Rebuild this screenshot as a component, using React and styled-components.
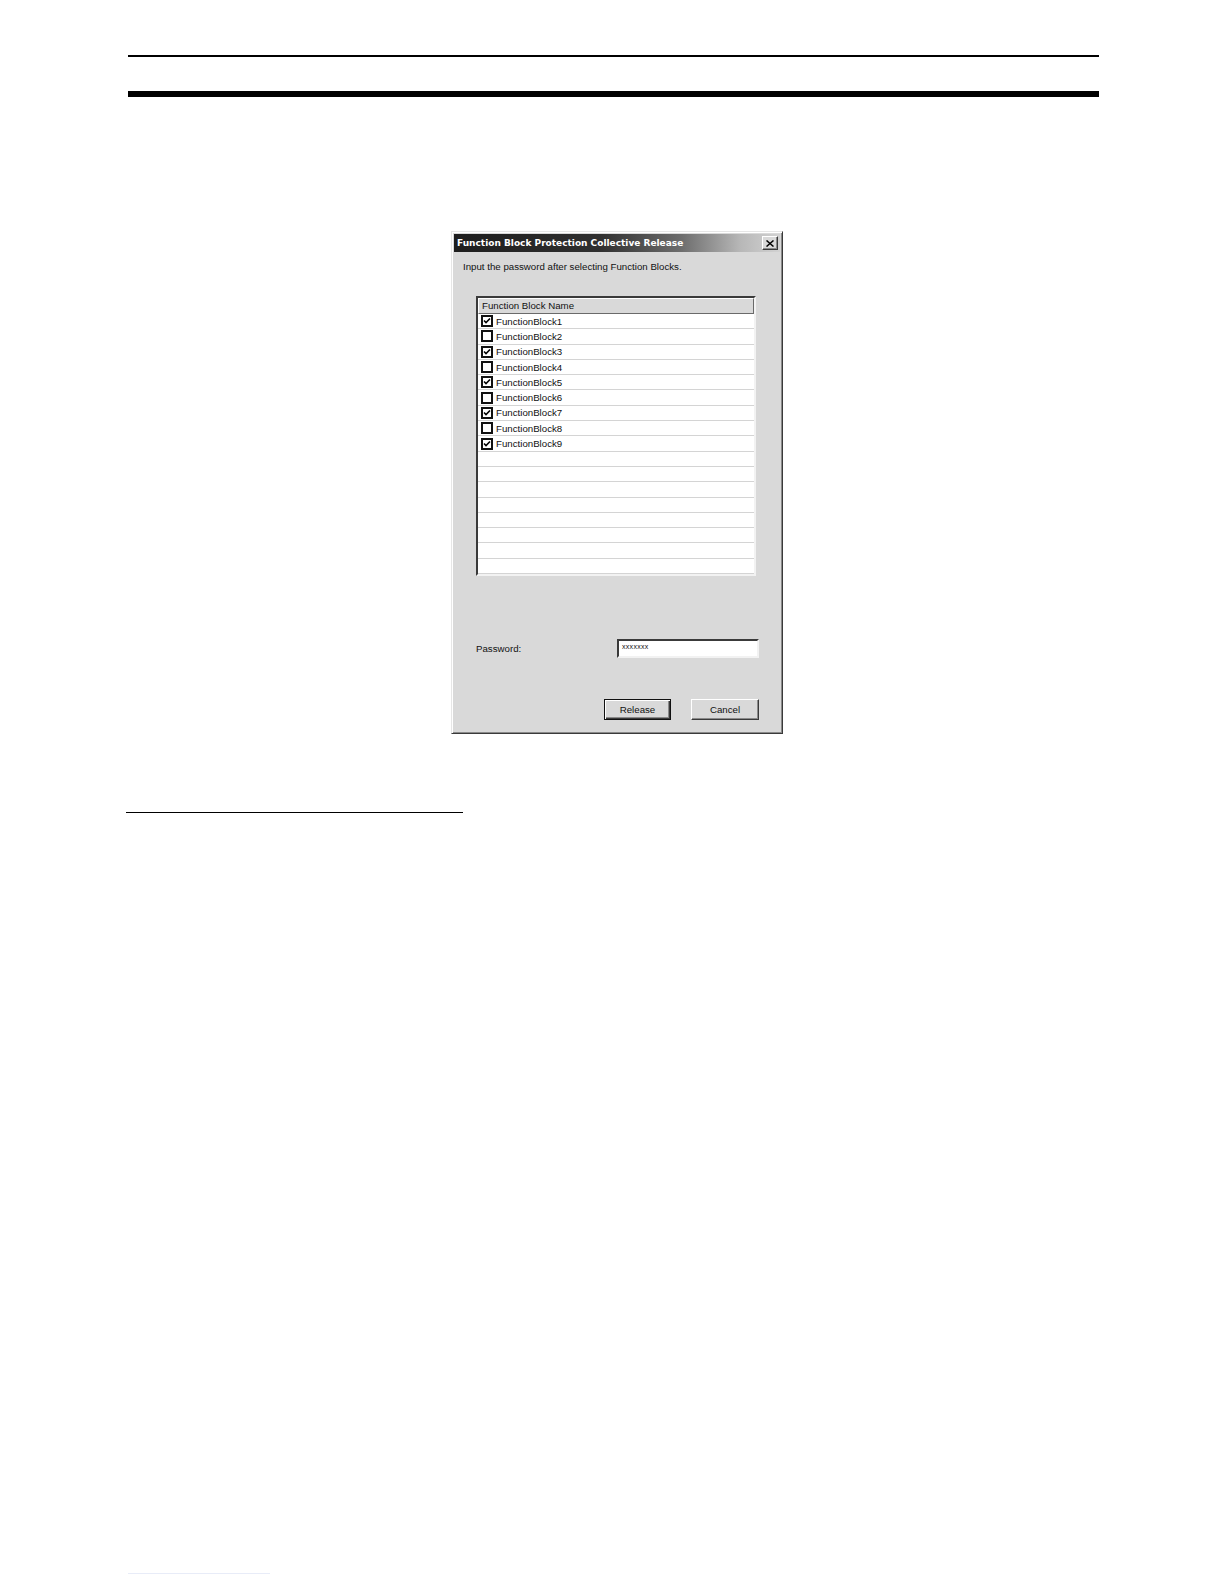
import React from 'react';
import styled, { createGlobalStyle } from 'styled-components';

const GlobalStyle = createGlobalStyle`
    html, body {
        margin: 0;
        padding: 0;
        background: #ffffff;
    }
`;

const blocks = [
    { name: 'FunctionBlock1', checked: true },
    { name: 'FunctionBlock2', checked: false },
    { name: 'FunctionBlock3', checked: true },
    { name: 'FunctionBlock4', checked: false },
    { name: 'FunctionBlock5', checked: true },
    { name: 'FunctionBlock6', checked: false },
    { name: 'FunctionBlock7', checked: true },
    { name: 'FunctionBlock8', checked: false },
    { name: 'FunctionBlock9', checked: true },
];

const EMPTY_ROWS = 8;

const CheckMark = () => (
    <svg width="8" height="8" viewBox="0 0 8 8">
        <path d="M1 3.5 L3 5.5 L7 1.5" fill="none" stroke="#000" strokeWidth="1.6" />
    </svg>
);

const CloseGlyph = () => (
    <svg width="8" height="7" viewBox="0 0 8 7">
        <path d="M0.5 0.5 L7.5 6.5 M7.5 0.5 L0.5 6.5" stroke="#000" strokeWidth="1.5" />
    </svg>
);

const App = () => {
    return (
        <Page>
            <GlobalStyle />
            <TopRule />
            <HeavyRule />
            <Figure>
                <Dialog>
                    <TitleBar>
                        <TitleText>Function Block Protection Collective Release</TitleText>
                        <CloseButton>
                            <CloseGlyph />
                        </CloseButton>
                    </TitleBar>
                    <DialogBody>
                        <Instruction>Input the password after selecting Function Blocks.</Instruction>
                        <ListBox>
                            <ListHeader>Function Block Name</ListHeader>
                            {blocks.map((block) => (
                                <ListRow key={block.name}>
                                    <CheckBox>{block.checked && <CheckMark />}</CheckBox>
                                    <span>{block.name}</span>
                                </ListRow>
                            ))}
                            {Array.from({ length: EMPTY_ROWS }).map((_, i) => (
                                <ListRow key={`empty-${i}`} />
                            ))}
                        </ListBox>
                        <PasswordRow>
                            <FieldLabel>Password:</FieldLabel>
                            <PasswordField>xxxxxxx</PasswordField>
                        </PasswordRow>
                        <ButtonRow>
                            <DialogButton primary>Release</DialogButton>
                            <DialogButton>Cancel</DialogButton>
                        </ButtonRow>
                    </DialogBody>
                </Dialog>
            </Figure>
            <FootRule />
            <PageFootLine />
        </Page>
    );
};

export default App;

const Page = styled.div`
    width: 1224px;
    min-height: 1584px;
    padding-top: 55px;
    box-sizing: border-box;
    font-family: 'Liberation Sans', Arial, sans-serif;
`;

const TopRule = styled.div`
    margin-left: 128px;
    width: 971px;
    height: 2px;
    background: #000;
`;

const HeavyRule = styled.div`
    margin: 34px 0 0 128px;
    width: 971px;
    height: 6px;
    background: #000;
`;

const Figure = styled.div`
    display: flex;
    justify-content: center;
    padding-left: 10px;
    margin-top: 134px;
`;

const Dialog = styled.div`
    width: 332px;
    box-sizing: border-box;
    background: #d9d9d9;
    border: 1px solid;
    border-color: #e6e6e6 #3a3a3a #3a3a3a #e6e6e6;
    box-shadow: inset 1px 1px 0 #ffffff, inset -1px -1px 0 #8a8a8a;
    padding: 2px;
`;

const TitleBar = styled.div`
    height: 18px;
    display: flex;
    align-items: center;
    justify-content: space-between;
    padding: 0 2px 0 3px;
    background: linear-gradient(90deg, #1e1e1e 0%, #303030 45%, #6e6e6e 70%, #b8b8b8 88%, #d2d2d2 100%);
`;

const TitleText = styled.span`
    font-family: 'DejaVu Sans', 'Liberation Sans', sans-serif;
    font-weight: bold;
    font-size: 9px;
    color: #ffffff;
    white-space: nowrap;
`;

const CloseButton = styled.div`
    width: 16px;
    height: 14px;
    box-sizing: border-box;
    display: flex;
    align-items: center;
    justify-content: center;
    background: #d9d9d9;
    border: 1px solid;
    border-color: #ffffff #3a3a3a #3a3a3a #ffffff;
    box-shadow: inset -1px -1px 0 #8a8a8a;
`;

const DialogBody = styled.div`
    padding: 8px 21px 11px 9px;
    font-size: 9.7px;
    color: #111;
`;

const Instruction = styled.div`
    line-height: 13px;
    white-space: nowrap;
`;

const ListBox = styled.div`
    margin: 23px 0 0 13px;
    width: 280px;
    height: 280px;
    box-sizing: border-box;
    background: #ffffff;
    border: 2px solid;
    border-color: #3a3a3a #f2f2f2 #f2f2f2 #3a3a3a;
    overflow: hidden;
`;

const ListHeader = styled.div`
    height: 16px;
    box-sizing: border-box;
    padding-left: 3px;
    line-height: 14px;
    background: #d9d9d9;
    border: 1px solid;
    border-color: #ffffff #6a6a6a #6a6a6a #ffffff;
    white-space: nowrap;
`;

const ListRow = styled.div`
    height: 15.3px;
    box-sizing: border-box;
    display: flex;
    align-items: center;
    gap: 3px;
    padding-left: 3px;
    border-bottom: 1px solid #d4d4d4;
    white-space: nowrap;
`;

const CheckBox = styled.span`
    width: 12px;
    height: 12px;
    box-sizing: border-box;
    display: flex;
    align-items: center;
    justify-content: center;
    border: 2px solid #111;
    background: #ffffff;
`;

const PasswordRow = styled.div`
    display: flex;
    align-items: center;
    margin: 63px 0 0 13px;
`;

const FieldLabel = styled.span`
    width: 141px;
`;

const PasswordField = styled.div`
    width: 142px;
    height: 19px;
    box-sizing: border-box;
    padding: 1px 3px;
    font-size: 7px;
    line-height: 9px;
    letter-spacing: 0.3px;
    background: #ffffff;
    border: 2px solid;
    border-color: #3a3a3a #f2f2f2 #f2f2f2 #3a3a3a;
`;

const ButtonRow = styled.div`
    display: flex;
    justify-content: flex-end;
    gap: 20px;
    margin-top: 41px;
`;

const DialogButton = styled.div`
    width: ${(props) => (props.primary ? '67px' : '68px')};
    height: 21px;
    box-sizing: border-box;
    display: flex;
    align-items: center;
    justify-content: center;
    background: #d9d9d9;
    border: 1px solid;
    border-color: ${(props) => (props.primary ? '#111' : '#ffffff #3a3a3a #3a3a3a #ffffff')};
    box-shadow: ${(props) =>
        props.primary
            ? 'inset 1px 1px 0 #ffffff, inset -1px -1px 0 #3a3a3a, inset -2px -2px 0 #8a8a8a'
            : 'inset -1px -1px 0 #8a8a8a'};
`;

const FootRule = styled.div`
    margin: 78px 0 0 126px;
    width: 337px;
    height: 1px;
    background: #000;
`;

const PageFootLine = styled.div`
    margin: 760px 0 0 128px;
    width: 142px;
    height: 1px;
    background: #e8ecf8;
`;
